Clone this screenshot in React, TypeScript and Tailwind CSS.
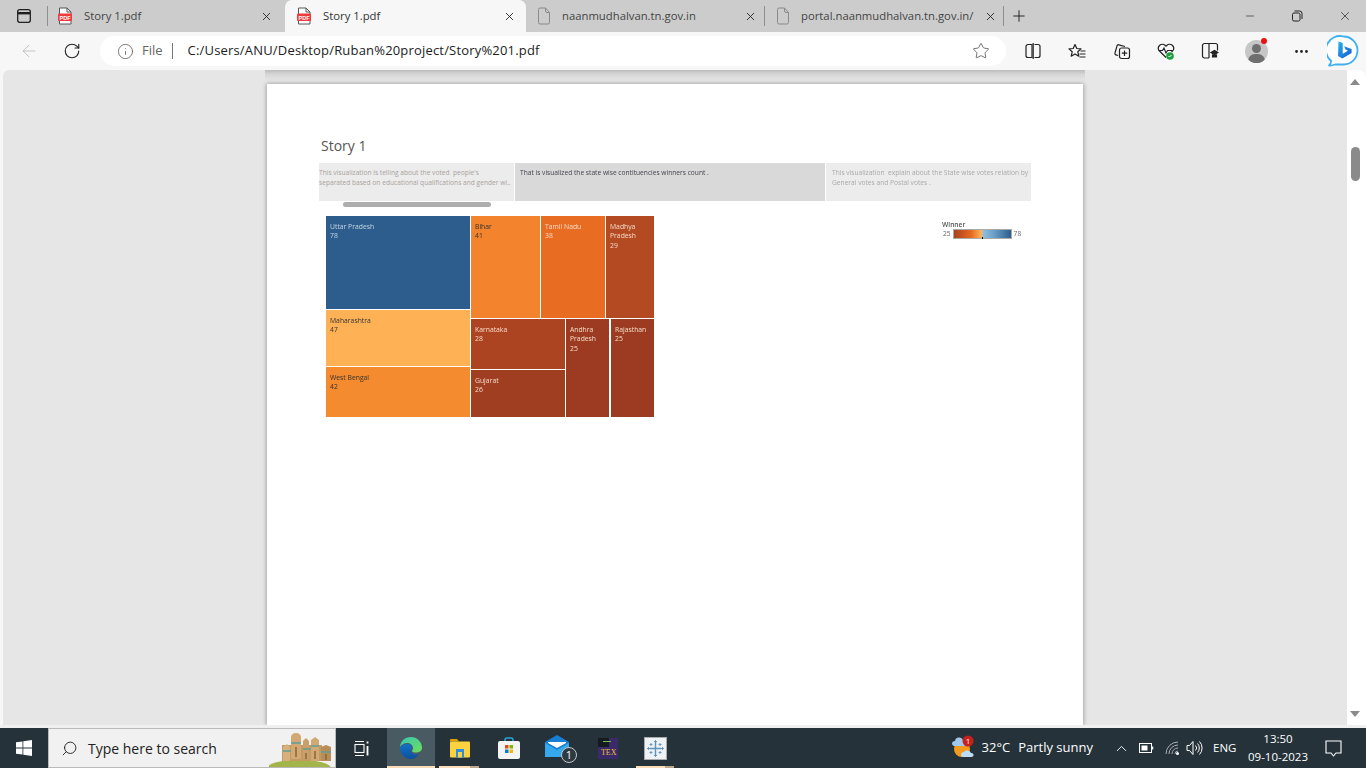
import React from "react";
import { X, Plus, Minus, ArrowLeft, RotateCw, Info, Star, Search, ChevronUp, Ellipsis } from "lucide-react";

const ui = "font-['Open_Sans','Noto_Sans',sans-serif]";

function PdfIcon() {
  return (
    <svg width="16" height="18" viewBox="0 0 16 18" className="shrink-0">
      <path d="M2.500 1h7.500l4 4v12h-11.500z" fill="#fff" stroke="#555" strokeWidth="1" />
      <path d="M10 1v4h4" fill="none" stroke="#555" />
      <rect x="1" y="6.500" width="14" height="7.500" rx="1" fill="#ee3b3b" />
      <text x="8" y="12.500" textAnchor="middle" fontSize="5.500" fontWeight="700" fill="#fff" fontFamily="Liberation Sans">PDF</text>
    </svg>
  );
}
function FileIcon() {
  return (
    <svg width="14" height="18" viewBox="0 0 14 18" fill="none" stroke="#8a8a8a" className="shrink-0">
      <path d="M1.500 2.500a1.500 1.500 0 0 1 1.500-1.500h5.500l4 4.500v10a1.500 1.500 0 0 1-1.500 1.500h-8a1.500 1.500 0 0 1-1.500-1.500z" />
      <path d="M8.500 1v3a1.500 1.500 0 0 0 1.500 1.500h2.500" />
    </svg>
  );
}
function Sep() {
  return <div className="h-[20px] w-px bg-[#8f8f8f] shrink-0" />;
}
function BgTab({ w, icon, label }: { w: string; icon: React.ReactNode; label: string }) {
  return (
    <div className={`${w} h-[32px] flex items-center pl-[11px] pr-[7px] gap-[11px] text-[#444]`}>
      {icon}
      <span className="flex-1 whitespace-nowrap text-[11.300px]">{label}</span>
      <X size={13} strokeWidth={1.600} className="text-[#222] shrink-0" />
    </div>
  );
}

function TabBar() {
  return (
    <div className={`h-[32px] bg-[#cccccc] flex items-center ${ui}`}>
      <div className="w-[47px] flex justify-center pl-[1px]">
        <svg width="16" height="16" viewBox="0 0 16 16" fill="none" stroke="#1f1f1f" strokeWidth="1.300">
          <rect x="1.700" y="1.700" width="12.600" height="12.600" rx="2" />
          <path d="M1.700 5.200h12.600" strokeWidth="2.400" />
        </svg>
      </div>
      <Sep />
      <div className="w-[237px] h-[32px] flex items-center pl-[9px] pr-[12px] gap-[11px] text-[#444]">
        <PdfIcon />
        <span className="flex-1 text-[11.300px] whitespace-nowrap">Story 1.pdf</span>
        <X size={13} strokeWidth={1.600} className="text-[#222]" />
      </div>
      <div className="w-[241px] h-[32px] bg-[#f7f7f7] rounded-t-[7px] flex items-center pl-[11px] pr-[10px] gap-[11px] text-[#333]">
        <PdfIcon />
        <span className="flex-1 text-[11.300px] whitespace-nowrap">Story 1.pdf</span>
        <X size={13} strokeWidth={1.600} className="text-[#222]" />
      </div>
      <BgTab w="w-[238px]" icon={<FileIcon />} label="naanmudhalvan.tn.gov.in" />
      <Sep />
      <BgTab w="w-[238px]" icon={<FileIcon />} label="portal.naanmudhalvan.tn.gov.in/" />
      <Sep />
      <div className="w-[30px] flex justify-center">
        <Plus size={18} strokeWidth={1.300} className="text-[#222]" />
      </div>
      <div className="flex-1" />
      <div className="w-[122px] flex items-center justify-between pr-[14px] text-[#222]">
        <Minus size={12} strokeWidth={1.300} />
        <svg width="12" height="12" viewBox="0 0 12 12" fill="none" stroke="#222">
          <rect x="1.500" y="3" width="7.500" height="8" rx="1.500" />
          <path d="M3.500 1h5a2.500 2.500 0 0 1 2.500 2.500v5.500" />
        </svg>
        <X size={14} strokeWidth={1.200} />
      </div>
    </div>
  );
}

function ToolIcon({ children }: { children: React.ReactNode }) {
  return <div className="w-[44px] flex justify-center items-center h-[37px]">{children}</div>;
}

function Toolbar() {
  return (
    <div className={`h-[38px] bg-[#f7f7f7] flex items-center ${ui}`}>
      <div className="w-[57px] flex justify-center pl-[1px]">
        <ArrowLeft size={20} strokeWidth={1.100} className="text-[#bdbdbd]" />
      </div>
      <div className="w-[30px] flex justify-center">
        <RotateCw size={18} strokeWidth={1.500} className="text-[#222]" />
      </div>
      <div className="ml-[13px] w-[906px] h-[30px] bg-white rounded-[15px] flex items-center pl-[17px] pr-[16px]">
        <Info size={17} strokeWidth={1.100} className="text-[#555]" />
        <span className="ml-[8px] text-[13px] text-[#666]">File</span>
        <div className="ml-[9px] w-px h-[16px] bg-[#777]" />
        <span className="ml-[15px] text-[13px] text-[#222] tracking-[0.18px] whitespace-nowrap">C:/Users/ANU/Desktop/Ruban%20project/Story%201.pdf</span>
        <div className="flex-1" />
        <Star size={18} strokeWidth={1.100} className="text-[#555]" />
      </div>
      <div className="flex items-center ml-[5px]">
        <ToolIcon>
          <svg width="16" height="16" viewBox="0 0 16 16" fill="none" stroke="#222" strokeWidth="1.200">
            <path d="M7 1.500h-4a2 2 0 0 0-2 2v9a2 2 0 0 0 2 2h4zM9.500 1.500h3.500a2 2 0 0 1 2 2v9a2 2 0 0 1-2 2h-3.500" />
            <path d="M8.200 0v16" />
          </svg>
        </ToolIcon>
        <ToolIcon>
          <svg width="18" height="17" viewBox="0 0 18 17" fill="none" stroke="#222" strokeWidth="1.200">
            <path d="M7 1.500l1.800 4 4.200.4-3.200 2.900 1 4.400-3.800-2.300-3.800 2.300 1-4.400L1 5.900l4.200-.4z" strokeLinejoin="round" />
            <path d="M12.500 8h5M11.500 11h6M11.500 14h6" />
          </svg>
        </ToolIcon>
        <div className="pl-[1px]">
          <ToolIcon>
            <svg width="18" height="18" viewBox="0 0 18 18" fill="none" stroke="#222" strokeWidth="1.200">
              <path d="M5 13.500l-2-.6a1.500 1.500 0 0 1-1-1.900l2-7.200a1.500 1.500 0 0 1 1.800-1l6.200 1.700" />
              <rect x="6.500" y="6" width="10" height="10.500" rx="2" />
              <path d="M11.500 8.500v5.500M8.800 11.200h5.400" />
            </svg>
          </ToolIcon>
        </div>
        <ToolIcon>
          <svg width="18" height="18" viewBox="0 0 18 18" fill="none">
            <path d="M9 15.500L2.500 9a4 4 0 0 1 0-5.500 4 4 0 0 1 5.800 0l.7.700.7-.7a4 4 0 0 1 5.800 0 4 4 0 0 1 0 5.500l-1 1" stroke="#222" strokeWidth="1.200" />
            <path d="M1.500 8.500h4l1.500-2.500 2 5 1.500-2.500h5" stroke="#222" strokeWidth="1.100" />
            <circle cx="13" cy="14" r="3.800" fill="#1e9e3e" />
            <path d="M11.500 14l1 1 2-2" stroke="#fff" strokeWidth="1" />
          </svg>
        </ToolIcon>
        <ToolIcon>
          <svg width="18" height="18" viewBox="0 0 18 18" fill="none" stroke="#222" strokeWidth="1.200">
            <path d="M8 16h-4.500a2 2 0 0 1-2-2v-10.500a2 2 0 0 1 2-2h11a2 2 0 0 1 2 2v5" />
            <path d="M8 1.500v14.500" />
            <path d="M10 10.500l3.500-2 3.500 2-3.500 2zM11.500 12.500v2.500h4v-2.500" fill="#222" />
          </svg>
        </ToolIcon>
        <div className="pl-[2px]">
          <ToolIcon>
            <div className="relative w-[23px] h-[23px] rounded-full bg-[#c6c6c6] overflow-hidden">
              <div className="absolute left-[7px] top-[4px] w-[9px] h-[9px] rounded-full bg-[#6f6f6f]" />
              <div className="absolute left-[3px] top-[14px] w-[17px] h-[14px] rounded-full bg-[#6f6f6f]" />
            </div>
            <div className="relative w-0 h-0">
              <div className="absolute -left-[7px] -top-[13px] w-[6px] h-[6px] rounded-full bg-[#ee1111]" />
            </div>
          </ToolIcon>
        </div>
        <div className="pl-[1px]">
          <ToolIcon>
            <Ellipsis size={17} strokeWidth={2} className="text-[#222]" />
          </ToolIcon>
        </div>
        <div className="w-[32px] flex justify-center ml-[4px]">
          <svg width="32" height="32" viewBox="0 0 32 32" fill="none">
            <defs>
              <linearGradient id="bb" x1="0" y1="0" x2="1" y2="1">
                <stop offset="0" stopColor="#27b3e8" />
                <stop offset="1" stopColor="#1857d6" />
              </linearGradient>
            </defs>
            <path d="M16.500 1.500a14 14 0 0 1 0 28h-8.500c-2.500 1-4.500 1.200-6 1 1.200-1 2-2.500 2.200-4.500a14 14 0 0 1 12.300-24.500z" fill="#fff" stroke="#3fb0f0" strokeWidth="1.800" strokeLinejoin="round" />
            <path d="M11.500 6.500l4.200 1.500v10.800l5.300-3-2.500-1.200-1.400-3.300 7.500 2.600v4l-9.200 5.600-4.400-2.500z" fill="url(#bb)" />
          </svg>
        </div>
      </div>
    </div>
  );
}

function Cell({ name, val, cls, w, h, dark }: { name: string; val: string; cls: string; w: string; h: string; dark?: boolean }) {
  return (
    <div className={`${cls} ${w} ${h} shrink-0 pl-[4px] pt-[6px] text-[6.800px] leading-[9.300px] ${dark ? "text-[#333]" : "text-[#f3dcc8]"}`}>
      <div className="w-[90%]">{name}</div>
      <div>{val}</div>
    </div>
  );
}

function Treemap() {
  return (
    <div className="flex gap-px ml-[59px] mt-[9px] w-[328px] h-[201px] blur-[0.2px]">
      <div className="flex flex-col gap-px w-[144px]">
        <Cell name="Uttar Pradesh" val="78" cls="bg-[#2c5d8c] !text-[#c9d6e3]" w="w-[144px]" h="h-[93px]" />
        <Cell name="Maharashtra" val="47" cls="bg-[#feb155]" w="w-[144px]" h="h-[56px]" dark />
        <Cell name="West Bengal" val="42" cls="bg-[#f58b2f]" w="w-[144px]" h="h-[50px]" dark />
      </div>
      <div className="flex flex-col gap-px w-[183px]">
        <div className="flex gap-px h-[102px]">
          <Cell name="Bihar" val="41" cls="bg-[#f3842d]" w="w-[69px]" h="h-[102px]" dark />
          <Cell name="Tamil Nadu" val="38" cls="bg-[#e86c22]" w="w-[64px]" h="h-[102px]" />
          <Cell name="Madhya Pradesh" val="29" cls="bg-[#b44a22]" w="w-[48px]" h="h-[102px]" />
        </div>
        <div className="flex gap-px h-[98px]">
          <div className="flex flex-col gap-px w-[94px]">
            <Cell name="Karnataka" val="28" cls="bg-[#ad4421]" w="w-[94px]" h="h-[50px]" />
            <Cell name="Gujarat" val="26" cls="bg-[#a03e21]" w="w-[94px]" h="h-[47px]" />
          </div>
          <Cell name="Andhra Pradesh" val="25" cls="bg-[#9c3b21]" w="w-[43px]" h="h-[98px]" />
          <div className="w-0 shrink-0" />
          <Cell name="Rajasthan" val="25" cls="bg-[#9c3b21]" w="w-[43px]" h="h-[98px]" />
        </div>
      </div>
    </div>
  );
}

function Page() {
  return (
    <div className={`w-[816px] h-[641px] bg-white ${ui}`}>
      <div className="pt-[53px] pl-[54px] text-[14px] leading-[18px] text-[#555]">Story 1</div>
      <div className="mt-[8px] ml-[52px] flex gap-px h-[38px] text-[6.650px] leading-[10px] blur-[0.2px]">
        <div className="w-[195px] bg-[#ececec] pt-[5px] text-[#a9a29c] whitespace-nowrap overflow-hidden">
          This visualization is telling about the voted&nbsp; people's<br />separated based on educational qualifications and gender wi..
        </div>
        <div className="w-[310px] bg-[#d9d9d9] pt-[5px] pl-[5px] text-[#44444e]">That is visualized the state wise contituencies winners count .</div>
        <div className="w-[205px] bg-[#ececec] pt-[5px] pl-[6px] text-[#a9a9a9] whitespace-nowrap">
          This visualization&nbsp; explain about the State wise votes relation by<br />General votes and Postal votes .
        </div>
      </div>
      <div className="ml-[76px] mt-[1px] w-[148px] h-[5px] rounded-full bg-[#adadad]" />
      <div className="flex items-start">
        <Treemap />
        <div className="ml-[288px] mt-[13px] text-[6.650px] text-[#666] blur-[0.2px]">
          <div className="leading-[9px] font-semibold text-[#555]">Winner</div>
          <div className="flex items-center gap-px pl-[1px] leading-[10px]">
            <span className="mr-px">25</span>
            <div className="relative w-[59px] h-[10px] border border-[#aaa] bg-[linear-gradient(90deg,#a8401f_0%,#e56a20_30%,#fdb35c_48%,#8fbedd_52%,#6a9fc8_70%,#2c5d8c_100%)]">
              <div className="absolute left-[28px] top-[7px] w-px h-[2px] bg-black" />
            </div>
            <span className="ml-px">78</span>
          </div>
        </div>
      </div>
    </div>
  );
}

function Content() {
  return (
    <div className="flex h-[655px] bg-[#f7f7f7] overflow-hidden pl-[3px]">
      <div className="flex-1 flex flex-col items-center bg-[#e6e6e6] rounded-tl-[6px] overflow-hidden">
        <div className="h-[14px] w-[820px] bg-[linear-gradient(#bcbcbc,#d6d6d6_30%,#e4e4e4_70%,#e6e6e6)]" />
        <div className="shadow-[-1px_0_4px_#b0b0b0,1px_0_4px_#b0b0b0]">
          <Page />
        </div>
      </div>
      <div className="w-[19px] bg-white rounded-tr-[8px] flex flex-col items-center pt-[9px] pr-[3px] shrink-0">
        <div className="w-0 h-0 border-l-[5px] border-r-[5px] border-b-[6px] border-l-transparent border-r-transparent border-b-[#8a8a8a]" />
        <div className="mt-[62px] w-[9px] h-[34px] rounded-full bg-[#8a8a8a]" />
        <div className="flex-1" />
        <div className="mb-[8px] w-0 h-0 border-l-[5px] border-r-[5px] border-t-[6px] border-l-transparent border-r-transparent border-t-[#8a8a8a]" />
      </div>
    </div>
  );
}

function TaskIcon({ children, active, under, w }: { children: React.ReactNode; active?: boolean; under?: boolean; w: string }) {
  return (
    <div className={`${w} h-[40px] relative flex items-center justify-center ${active ? "bg-[#4a5a62]" : ""}`}>
      {children}
      {under && (
        <div className="absolute bottom-0 left-[4px] right-[5px] h-[2px] flex">
          <div className="flex-1 bg-[#fbdcb8]" />
          <div className="w-[9px] bg-[#c0a78c]" />
        </div>
      )}
      {active && <div className="absolute bottom-0 left-0 right-0 h-[2px] bg-[#fbdcb8]" />}
    </div>
  );
}

function Taskbar() {
  return (
    <div className={`h-[40px] bg-[#25323a] flex items-center text-white ${ui}`}>
      <div className="w-[48px] flex justify-center">
        <svg width="16" height="16" viewBox="0 0 16 16" fill="#fff">
          <path d="M0 2.300l6.500-.9v6.200h-6.500zM7.300 1.300l8.700-1.300v7.600h-8.700zM0 8.400h6.500v6.200l-6.500-.9zM7.300 8.400h8.700v7.600l-8.700-1.200z" />
        </svg>
      </div>
      <div className="w-[288px] h-[40px] bg-[#f1f1f1] border border-[#b9b9b9] flex items-center pl-[12px] text-[#222] relative overflow-hidden">
        <Search size={17} strokeWidth={1.200} className="-scale-x-100 text-[#111]" />
        <span className="ml-[10px] text-[14px] whitespace-nowrap">Type here to search</span>
        <svg width="66" height="38" viewBox="0 0 66 38" className="absolute right-0 top-0">
          <ellipse cx="30" cy="39" rx="32" ry="8" fill="#a3b44a" />
          <rect x="13" y="16" width="40" height="16" fill="#c39a63" />
          <path d="M14 32v-14l4-3 3 3v14z" fill="#d6b17f" />
          <path d="M22 30v-22c0-2 2-4 5-4s5 2 5 4v22z" fill="#d2a972" />
          <path d="M34 30v-18l3-3 3 3v18z" fill="#caa06a" />
          <path d="M42 32v-21l4-3 4 3v21z" fill="#d2a972" />
          <path d="M52 32v-14l5-2 5 2v14z" fill="#b98d58" />
          <path d="M22 14h10M42 17h8M14 22h8M34 20h8M52 23h10" stroke="#5f9d9a" strokeWidth="1.500" />
          <path d="M27 18v10M46 22v8M57 25v6M37 24v6" stroke="#8a6539" strokeWidth="1.500" />
        </svg>
      </div>
      <div className="w-[50px] flex justify-center ml-[1px]">
        <svg width="16" height="17" viewBox="0 0 16 17" fill="none" stroke="#fff" strokeWidth="1.100">
          <path d="M1 1.500h9M1 15.500h9" />
          <rect x="1" y="4.500" width="9" height="8" />
          <path d="M13.500 1.500v2M13.500 6v9.500" strokeWidth="1.800" />
        </svg>
      </div>
      <TaskIcon active w="w-[48px]">
        <svg width="24" height="24" viewBox="0 0 24 24">
          <defs>
            <linearGradient id="e1" x1="0" y1="0" x2="1" y2="1"><stop offset="0" stopColor="#37c9b3" /><stop offset="1" stopColor="#6fdc5c" /></linearGradient>
            <linearGradient id="e2" x1="0" y1="0" x2="0" y2="1"><stop offset="0" stopColor="#1272c9" /><stop offset="1" stopColor="#0c4f9e" /></linearGradient>
          </defs>
          <path d="M12 1a11 11 0 0 1 11 11c0 3-3 4.500-6 4.500-2 0-4-.5-4-1.500 0-.5 1-1 1-3 0-3-3-5-6-5-3 0-6 2-7 4 .5-6 5-10 11-10z" fill="url(#e1)" />
          <path d="M1 12c1-2.500 4-4 7-4 2.500 0 5 1.500 5 4-1 1-2 3 0 5 2 1.500 5 2 7 1-2 3.500-5 5-8 5-6 0-11-5-11-11z" fill="url(#e2)" />
        </svg>
      </TaskIcon>
      <TaskIcon under w="w-[49px]">
        <svg width="22" height="20" viewBox="0 0 22 20">
          <path d="M1 2a1 1 0 0 1 1-1h6l2 2.500h-9z" fill="#e0a100" />
          <rect x="1" y="3.500" width="20" height="16" rx="1" fill="#fcd33e" />
          <rect x="7" y="11" width="8" height="8.500" fill="#2c8fdc" />
          <rect x="9" y="14" width="4" height="5.500" fill="#fcd33e" />
        </svg>
      </TaskIcon>
      <TaskIcon w="w-[50px]">
        <svg width="24" height="24" viewBox="0 0 24 24">
          <path d="M8 6V4a2 2 0 0 1 2-2h4a2 2 0 0 1 2 2v2" fill="none" stroke="#29a8e0" strokeWidth="1.500" />
          <rect x="1" y="5" width="22" height="18" rx="2" fill="#f4f4f4" />
          <rect x="8" y="9" width="3.500" height="3.500" fill="#e8491f" />
          <rect x="12.500" y="9" width="3.500" height="3.500" fill="#7fba00" />
          <rect x="8" y="13.500" width="3.500" height="3.500" fill="#0a78d4" />
          <rect x="12.500" y="13.500" width="3.500" height="3.500" fill="#fbb500" />
        </svg>
      </TaskIcon>
      <TaskIcon w="w-[49px]">
        <svg width="36" height="30" viewBox="0 0 36 30" className="ml-[5px]">
          <path d="M2 9l12-7 12 7v15h-24z" fill="#1780d4" />
          <path d="M2 10l12 7 12-7v14h-24z" fill="#36a9ee" />
          <path d="M5 10l9 5 9-5v-1h-18z" fill="#fff" />
          <circle cx="26" cy="22" r="7.500" fill="#2d3a42" stroke="#c6c6c6" strokeWidth="1" />
          <text x="26" y="26" textAnchor="middle" fontSize="11" fill="#fff" fontFamily="Open Sans">1</text>
        </svg>
      </TaskIcon>
      <TaskIcon w="w-[49px]">
        <div className="relative w-[20px] h-[21px] bg-[#3a2a6a] flex items-end justify-end pr-[1px] pb-[2px] overflow-hidden">
          <div className="absolute left-0 top-0 w-[11px] h-[9px] bg-[#141a20]" />
          <div className="absolute left-[5px] top-[3px] w-[8px] h-[1px] bg-[#7bbf4a]" />
          <span className="relative text-[8px] leading-none text-[#f0c030] font-['Liberation_Serif',serif]">TEX</span>
        </div>
      </TaskIcon>
      <TaskIcon under w="w-[47px]">
        <div className="w-[23px] h-[23px] bg-[#eef2f5] border border-[#aaa] flex items-center justify-center">
          <svg width="19" height="19" viewBox="0 0 19 19" stroke="#5b93bd" fill="none">
            <path d="M9.500 3v13M4 9.500h11" strokeWidth="1.400" />
            <path d="M9.500 1v3M8 2.500h3M9.500 15v3M8 16.500h3M2.500 8v3M1 9.500h3M16.500 8v3M15 9.500h3M5 4v3M3.500 5.500h3M14 4v3M12.500 5.500h3M5 12v3M3.500 13.500h3M14 12v3M12.500 13.500h3" strokeWidth="0.900" />
          </svg>
        </div>
      </TaskIcon>
      <div className="flex-1" />
      <div className="flex items-center">
        <svg width="26" height="26" viewBox="0 0 26 26" className="mr-[6px]">
          <circle cx="12" cy="14" r="8" fill="#f29a1f" />
          <path d="M2 9a3 3 0 0 1 3-3 4 4 0 0 1 8 1 2 2 0 0 1 1 4h-10a3 3 0 0 1-2-2z" fill="#9fc9ec" />
          <path d="M11 20a3 3 0 0 1 3-3 4 4 0 0 1 7 1 2 2 0 0 1 1 4h-9a2 2 0 0 1-2-2z" fill="#bcdcf5" />
          <circle cx="18" cy="6" r="5.500" fill="#c8201c" />
          <text x="18" y="9" textAnchor="middle" fontSize="8" fill="#fff" fontFamily="Open Sans">1</text>
        </svg>
        <span className="text-[13px] whitespace-nowrap">32°C</span>
        <span className="ml-[8px] text-[13px] whitespace-nowrap">Partly sunny</span>
        <ChevronUp size={17} strokeWidth={1.300} className="ml-[20px]" />
        <svg width="15" height="10" viewBox="0 0 15 10" fill="none" stroke="#fff" className="ml-[9px]">
          <rect x="0.500" y="0.500" width="12" height="9" />
          <rect x="2.500" y="2.500" width="6" height="5" fill="#fff" stroke="none" />
          <path d="M13.500 3.500v3" strokeWidth="1.500" />
        </svg>
        <svg width="15" height="14" viewBox="0 0 15 14" fill="none" stroke="#a9b0b4" className="ml-[11px]">
          <path d="M1 13a12 12 0 0 1 12-12M4 13a9 9 0 0 1 9-9M7 13a6 6 0 0 1 6-6M10 13a3 3 0 0 1 3-3" strokeWidth="1" />
          <circle cx="12.500" cy="12.500" r="1.500" fill="#fff" stroke="none" />
        </svg>
        <svg width="17" height="16" viewBox="0 0 17 16" fill="none" stroke="#fff" strokeWidth="1" className="ml-[6px]">
          <path d="M1 5.500h2.500l3.500-4v13l-3.500-4h-2.500z" />
          <path d="M9.500 5.500a3.500 3.500 0 0 1 0 5M11.500 3.500a6.500 6.500 0 0 1 0 9M13.500 1.500a9.500 9.500 0 0 1 0 13" />
        </svg>
        <span className="ml-[10px] text-[11.500px] w-[33px] whitespace-nowrap">ENG</span>
        <div className="w-[64px] text-center text-[11.500px] leading-[18px] mt-[-1px]">
          <div>13:50</div>
          <div>09-10-2023</div>
        </div>
        <div className="w-[47px] mr-[9px] flex justify-center">
          <svg width="17" height="17" viewBox="0 0 17 17" fill="none" stroke="#fff" strokeWidth="1.100">
            <path d="M1 1h15v12h-5l-2.500 3-2.500-3h-5z" />
          </svg>
        </div>
      </div>
    </div>
  );
}

export default function App() {
  return (
    <div className="w-[1366px] h-[768px] overflow-hidden bg-white flex flex-col">
      <TabBar />
      <Toolbar />
      <Content />
      <div className="h-[3px] bg-[#f0f0f0]" />
      <Taskbar />
    </div>
  );
}
